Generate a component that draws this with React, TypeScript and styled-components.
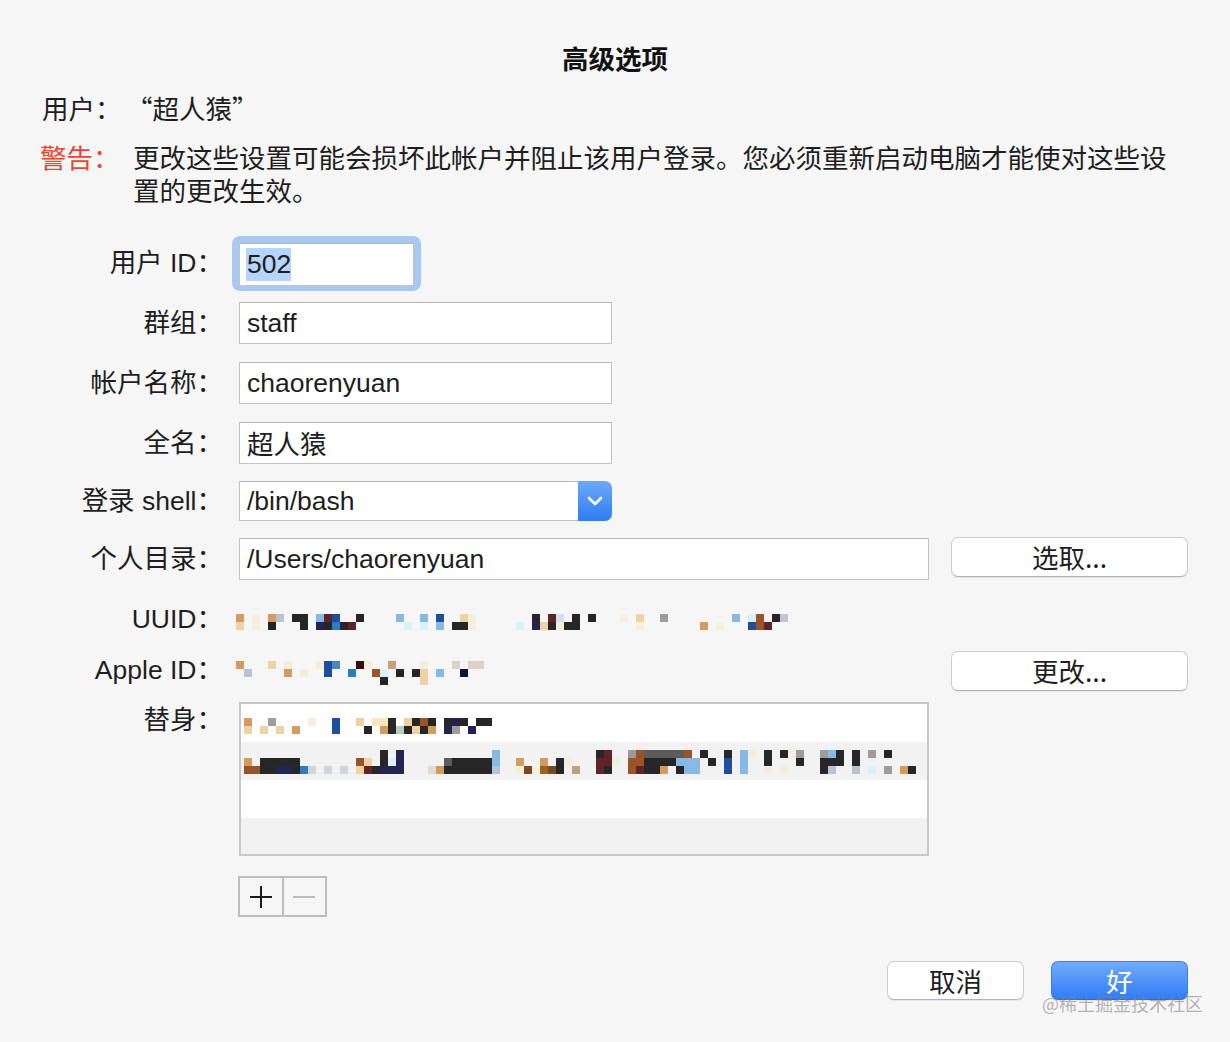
import React from "react";
import styled, { createGlobalStyle } from "styled-components";

const GlobalStyle = createGlobalStyle`
  html, body { margin: 0; padding: 0; }
  body {
    background: #f6f6f6;
    font-family: "Liberation Sans", "Noto Sans CJK SC", sans-serif;
    color: #1e1e1e;
  }
  * { box-sizing: border-box; }
`;

const PAL: Record<string, string> = {
  t: "#d39c5e", T: "#efd1a4", c: "#f2efdc", k: "#262626", g: "#b6c4d4",
  l: "#86b9e4", p: "#d9f2f3", n: "#242452", r: "#5e2428", b: "#1f4e9c",
  m: "#2a7dc2", q: "#cfe0ef", G: "#9c9c9c", D: "#5c5c5c", o: "#9b5427",
  v: "#c3c3da", s: "#4a86c2", R: "#3a0b0b", u: "#caa07a", e: "#ddd0c7",
  N: "#0f1040", h: "#b8c9c0", y: "#fde5c0", L: "#d1d5d9", w: "#e1d9d5",
  d: "#7a4a1f", O: "#9c6222", x: "#bfa080",
};

const UUID_ROWS = [
  "t.c.tg.kk.lrb..k" + "....l..l.b..Tc" + "......." + "k.rq.k.k" + "...c.T..G" + "........" + "l.po.kv",
  "T.c.k...k.nkmkr." + ".....p.p.l.kkc" + ".....p." + "nTkckk.." + ".....c..." + "....t.c." + "..bor..",
];

const APPLE_ROWS = [
  "t...T.c...cbs..Rc..u...c...e.ee",
  ".g....t.c..b..m..op.k.kT.l..N",
  "..................k....T",
];

const ALIAS1_ROWS = [
  "t..G....c..b..T.yyk.Tkok.knk.kk",
  "T.T.T.t....b...k.tkhkTkt.nG.n",
];

const ALIAS2_ROWS = [
  "................." + "k.n" + "..........." + "l" + "............" + "kr..GoDDDDDo.k..k.lc.k.kcG..Glk.k.G.k",
  "t.kkkkk" + "......." + "oT.kpn" + ".....Dkkkkkl" + "..t..t.kc..." + "rrc.ookkkklll.k.b.l..k...k..kkk.k",
  "ookknnkmL.L.L.Trknnn...wtkkkkkkg..cdcOdk.x.." + "rk..orkkt.kll...b.l..c.c....kg..g.p.G.tk",
];

const PixelSvg = styled.svg`
  display: block;
  flex-shrink: 0;
  shape-rendering: crispEdges;
`;

const Pixels: React.FC<{ rows: string[]; cell?: number }> = ({ rows, cell = 8 }) => {
  const w = Math.max(...rows.map((r) => r.length)) * cell;
  const h = rows.length * cell;
  return (
    <PixelSvg width={w} height={h} viewBox={`0 0 ${w} ${h}`}>
      {rows.flatMap((r, y) =>
        [...r].map((ch, x) =>
          ch === "." ? null : (
            <rect key={`${x}-${y}`} x={x * cell} y={y * cell} width={cell} height={cell} fill={PAL[ch]} />
          )
        )
      )}
    </PixelSvg>
  );
};

const Page = styled.div`
  position: relative;
  min-height: 1042px;
  padding-top: 40px;
  font-size: 26.5px;
`;

const Title = styled.h1`
  margin: 0;
  text-align: center;
  font-family: "Noto Sans CJK SC", sans-serif;
  font-size: 26.5px;
  font-weight: 700;
  line-height: 36px;
  color: #111;
`;

const Header = styled.div`
  margin: 14px 42px 0 40px;
  display: grid;
  grid-template-columns: 93px 1fr;
  row-gap: 14px;
`;

const HeadLabel = styled.div<{ $warn?: boolean }>`
  font-family: "Noto Sans CJK SC", sans-serif;
  line-height: ${(p) => (p.$warn ? "33px" : "36px")};
  color: ${(p) => (p.$warn ? "#ea462f" : "#1e1e1e")};
  padding-left: ${(p) => (p.$warn ? "0" : "2px")};
`;

const HeadValue = styled.div<{ $warn?: boolean; $shift?: number }>`
  font-family: "Noto Sans CJK SC", sans-serif;
  line-height: ${(p) => (p.$warn ? "33px" : "36px")};
  margin-left: ${(p) => p.$shift ?? 0}px;
`;

const Form = styled.div`
  margin-top: 27px;
  width: 1188px;
  display: grid;
  grid-template-columns: 217px 690px 237px;
  grid-template-rows: 60px 60px 60px 60px 56px 60px 60px 42px auto;
  column-gap: 22px;
`;

const Label = styled.div<{ $top?: boolean }>`
  display: flex;
  align-items: ${(p) => (p.$top ? "flex-start" : "center")};
  justify-content: flex-end;
  margin-right: -6px;
  margin-top: ${(p) => (p.$top ? "11px" : "0")};
  line-height: 36px;
  white-space: nowrap;
  color: #1e1e1e;
`;

const Cell = styled.div<{ $top?: boolean }>`
  display: flex;
  align-items: ${(p) => (p.$top ? "flex-start" : "center")};
  min-width: 0;
`;

const TextField = styled.div<{ $w: number; $h?: number }>`
  width: ${(p) => p.$w}px;
  height: ${(p) => p.$h ?? 42}px;
  background: #fff;
  border: 1px solid #c4c4c4;
  border-top-color: #b6b6b6;
  padding: 0 7px;
  display: flex;
  align-items: center;
  line-height: 34px;
  white-space: nowrap;
`;

const CjkText = styled.span`
  font-family: "Noto Sans CJK SC", sans-serif;
`;

const FocusRing = styled.div`
  margin-left: -7px;
  padding: 7px 7px 5px 7px;
  background: #a9c8f1;
  border-radius: 8px;
`;

const Selected = styled.span`
  background: #b4d5fe;
  margin-left: -1px;
  padding: 0 0 0 1px;
  line-height: 33px;
`;

const Select = styled.div`
  width: 373px;
  height: 40px;
  display: flex;
`;

const SelectText = styled.div`
  flex: 1;
  background: #fff;
  border: 1px solid #c4c4c4;
  border-right: none;
  border-top-color: #b6b6b6;
  padding: 0 7px;
  display: flex;
  align-items: center;
`;

const SelectButton = styled.div`
  width: 34px;
  border-radius: 0 7px 7px 0;
  background: linear-gradient(#6ea9f9, #2f7cf5);
  display: flex;
  align-items: center;
  justify-content: center;
`;

const PushButton = styled.div<{ $shift?: number }>`
  width: 237px;
  height: 40px;
  margin-top: ${(p) => p.$shift ?? 0}px;
  background: #fff;
  border: 1px solid #cdcdcd;
  border-bottom-color: #b3b3b3;
  border-radius: 7px;
  box-shadow: 0 1px 1px rgba(0, 0, 0, 0.06);
  display: flex;
  align-items: center;
  justify-content: center;
  font-family: "Noto Sans CJK SC", sans-serif;
  line-height: 36px;
  color: #1e1e1e;
`;

const ButtonCell = styled.div`
  display: flex;
  align-items: center;
`;

const ArtBox = styled.div<{ $dx?: number; $dy?: number }>`
  margin-left: ${(p) => p.$dx ?? 0}px;
  margin-top: ${(p) => p.$dy ?? 0}px;
`;

const AliasColumn = styled.div`
  margin-top: 11px;
  display: flex;
  flex-direction: column;
  gap: 20px;
`;

const List = styled.div`
  width: 690px;
  border: 2px solid #c8c8c8;
  background: #fff;
`;

const ListRow = styled.div<{ $alt?: boolean; $pad?: number; $h?: number }>`
  height: ${(p) => p.$h ?? 38}px;
  background: ${(p) => (p.$alt ? "#f2f2f2" : "#fff")};
  padding: ${(p) => p.$pad ?? 0}px 0 0 3px;
`;

const PlusMinus = styled.div`
  margin-left: -1px;
  width: 89px;
  height: 41px;
  border: 2px solid #bdbdbd;
  display: flex;
`;

const PMHalf = styled.div<{ $divider?: boolean }>`
  flex: 1;
  display: flex;
  align-items: center;
  justify-content: center;
  border-right: ${(p) => (p.$divider ? "2px solid #bdbdbd" : "none")};
`;

const Footer = styled.div`
  width: 1188px;
  margin-top: 44px;
  display: flex;
  justify-content: flex-end;
  gap: 27px;
`;

const DialogButton = styled.div<{ $primary?: boolean }>`
  width: 137px;
  height: 39px;
  border-radius: 7px;
  display: flex;
  align-items: center;
  justify-content: center;
  font-family: "Noto Sans CJK SC", sans-serif;
  line-height: 36px;
  color: ${(p) => (p.$primary ? "#fff" : "#1e1e1e")};
  background: ${(p) => (p.$primary ? "linear-gradient(#72abf9, #2f7cf6)" : "#fff")};
  border: 1px solid ${(p) => (p.$primary ? "#3a80ec" : "#cdcdcd")};
  border-bottom-color: ${(p) => (p.$primary ? "#2a6fe0" : "#b3b3b3")};
  box-shadow: 0 1px 1px rgba(0, 0, 0, 0.06);
`;

const Watermark = styled.div`
  position: absolute;
  right: 27px;
  top: 990px;
  font-family: "Noto Sans CJK SC", sans-serif;
  font-size: 18px;
  line-height: 26px;
  color: rgba(130, 130, 130, 0.6);
  pointer-events: none;
`;

const Chevron = () => (
  <svg width="16" height="10" viewBox="0 0 16 10">
    <path d="M2 2 L8 8 L14 2" fill="none" stroke="#fff" strokeWidth="2.6" strokeLinecap="round" strokeLinejoin="round" />
  </svg>
);

const PlusIcon = () => (
  <svg width="24" height="24" viewBox="0 0 24 24">
    <path d="M12 1 V23 M1 12 H23" stroke="#1a1a1a" strokeWidth="2" />
  </svg>
);

const MinusIcon = () => (
  <svg width="24" height="24" viewBox="0 0 24 24">
    <path d="M1 12 H23" stroke="#bcbcbc" strokeWidth="2" />
  </svg>
);

export default function App() {
  return (
    <>
      <GlobalStyle />
      <Page>
        <Title>高级选项</Title>
        <Header>
          <HeadLabel>用户：</HeadLabel>
          <HeadValue $shift={-7}>“超人猿”</HeadValue>
          <HeadLabel $warn>警告：</HeadLabel>
          <HeadValue $warn>
            更改这些设置可能会损坏此帐户并阻止该用户登录。您必须重新启动电脑才能使对这些设置的更改生效。
          </HeadValue>
        </Header>

        <Form>
          <Label>用户 ID：</Label>
          <Cell>
            <FocusRing>
              <TextField $w={175} $h={43}>
                <Selected>502</Selected>
              </TextField>
            </FocusRing>
          </Cell>
          <div />

          <Label>群组：</Label>
          <Cell>
            <TextField $w={373}>staff</TextField>
          </Cell>
          <div />

          <Label>帐户名称：</Label>
          <Cell>
            <TextField $w={373}>chaorenyuan</TextField>
          </Cell>
          <div />

          <Label>全名：</Label>
          <Cell>
            <TextField $w={373}>
              <CjkText>超人猿</CjkText>
            </TextField>
          </Cell>
          <div />

          <Label>登录 shell：</Label>
          <Cell>
            <Select>
              <SelectText>/bin/bash</SelectText>
              <SelectButton>
                <Chevron />
              </SelectButton>
            </Select>
          </Cell>
          <div />

          <Label>个人目录：</Label>
          <Cell>
            <TextField $w={690}>/Users/chaorenyuan</TextField>
          </Cell>
          <ButtonCell>
            <PushButton $shift={-4}>选取...</PushButton>
          </ButtonCell>

          <Label>UUID：</Label>
          <Cell>
            <ArtBox $dx={-3} $dy={6}>
              <Pixels rows={UUID_ROWS} />
            </ArtBox>
          </Cell>
          <div />

          <Label>Apple ID：</Label>
          <Cell>
            <ArtBox $dx={-3} $dy={6}>
              <Pixels rows={APPLE_ROWS} />
            </ArtBox>
          </Cell>
          <ButtonCell>
            <PushButton $shift={2}>更改...</PushButton>
          </ButtonCell>

          <Label $top>替身：</Label>
          <Cell $top>
            <AliasColumn>
              <List>
                <ListRow $pad={14}>
                  <Pixels rows={ALIAS1_ROWS} />
                </ListRow>
                <ListRow $alt $pad={8}>
                  <Pixels rows={ALIAS2_ROWS} />
                </ListRow>
                <ListRow />
                <ListRow $alt $h={36} />
              </List>
              <PlusMinus>
                <PMHalf $divider>
                  <PlusIcon />
                </PMHalf>
                <PMHalf>
                  <MinusIcon />
                </PMHalf>
              </PlusMinus>
            </AliasColumn>
          </Cell>
          <div />
        </Form>

        <Footer>
          <DialogButton>取消</DialogButton>
          <DialogButton $primary>好</DialogButton>
        </Footer>
        <Watermark>@稀土掘金技术社区</Watermark>
      </Page>
    </>
  );
}
